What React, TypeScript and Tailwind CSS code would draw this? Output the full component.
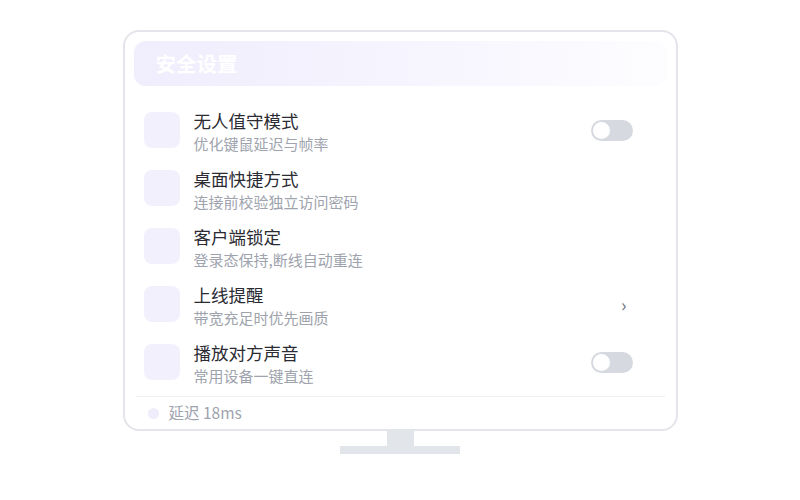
const rows = [
  { title: "无人值守模式", sub: "优化键鼠延迟与帧率", action: "toggle" },
  { title: "桌面快捷方式", sub: "连接前校验独立访问密码", action: "none" },
  { title: "客户端锁定", sub: "登录态保持,断线自动重连", action: "none" },
  { title: "上线提醒", sub: "带宽充足时优先画质", action: "chevron" },
  { title: "播放对方声音", sub: "常用设备一键直连", action: "toggle" },
];

function Toggle() {
  return (
    <div className="flex h-[21px] w-[42px] items-center rounded-full bg-[#d6d9df] px-[2px]">
      <div className="h-[17px] w-[17px] rounded-full bg-white" />
    </div>
  );
}

export default function App() {
  return (
    <div
      className="flex h-[500px] w-[800px] flex-col items-center bg-white pt-[30px]"
      style={{ fontFamily: '"Noto Sans CJK SC", "Noto Sans", sans-serif' }}
    >
      <div className="flex h-[401px] w-[555px] flex-col rounded-[16px] border-2 border-[#e3e5ea] bg-white p-[9px] pb-0">
        <div className="flex h-[45px] shrink-0 items-center rounded-[12px] bg-gradient-to-r from-[#f0edfd] via-[#f6f4fe] to-[#fdfdff] pl-[22px]">
          <span className="text-[20.5px] font-bold leading-none text-white">安全设置</span>
        </div>

        <div className="mt-[15px] flex flex-col">
          {rows.map((r) => (
            <div key={r.title} className="flex h-[58px] items-center pl-[10px] pr-[34px]">
              <div className="h-[36px] w-[36px] shrink-0 rounded-[8px] bg-[#f3f0fd]" />
              <div className="ml-[14px] flex flex-1 flex-col pt-[3px]">
                <span className="text-[17.5px] leading-[22px] text-[#2b2b33]">{r.title}</span>
                <span className="mt-[2px] text-[15px] leading-[20px] text-[#9ea3ad]">{r.sub}</span>
              </div>
              {r.action === "toggle" && <Toggle />}
              {r.action === "chevron" && (
                <span className="mr-[6px] text-[18px] leading-none text-[#6b7280]">›</span>
              )}
            </div>
          ))}
        </div>

        <div className="mx-[2px] mt-[5px] h-px bg-[#eeeff3]" />
        <div className="flex flex-1 items-center pl-[14px]">
          <div className="h-[11px] w-[11px] rounded-full bg-[#efedfc]" />
          <span className="ml-[10px] text-[15.5px] text-[#9ea3ad]">延迟 18ms</span>
        </div>
      </div>
      <div className="h-[15px] w-[27px] bg-[#e2e5e9]" />
      <div className="h-[8px] w-[120px] bg-[#e2e5e9]" />
    </div>
  );
}
